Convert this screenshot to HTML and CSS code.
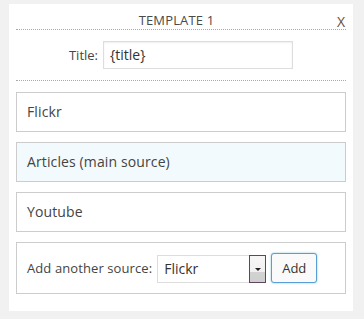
FILE: index.html
```html
<!DOCTYPE html>
<html>
<head>
<meta charset="utf-8">
<link rel="stylesheet" href="styles.css">
</head>
<body>
<div class="panel">
  <div class="header">
    <div class="header-title">TEMPLATE 1</div>
    <div class="close">X</div>
  </div>
  <div class="title-row">
    <label class="title-label">Title:</label>
    <div class="title-input">{title}</div>
  </div>
  <div class="source first">Flickr</div>
  <div class="source main">Articles (main source)</div>
  <div class="source">Youtube</div>
  <div class="add-row">
    <span class="add-label">Add another source:</span>
    <div class="select">
      <span class="select-value">Flickr</span>
      <span class="select-arrow"><span class="tri"></span></span>
    </div>
    <button class="add-btn">Add</button>
  </div>
</div>
</body>
</html>
```
FILE: styles.css
```css
html, body {
  margin: 0;
  padding: 0;
  background: #f1f1f1;
}
body {
  font-family: "Open Sans", "DejaVu Sans", sans-serif;
  color: #444;
}
.panel {
  margin: 4px 11px 0 9px;
  background: #fff;
  padding: 0 7px 17px 7px;
  height: 290px;
}
.header {
  display: flex;
  align-items: flex-end;
  padding-top: 7px;
  border-bottom: 1px dotted #aaa;
}
.header-title {
  flex: 1;
  text-align: center;
  font-size: 13px;
  line-height: 18px;
  letter-spacing: 0.15px;
  color: #4a4a4a;
}
.close {
  font-size: 14px;
  line-height: 14px;
  color: #6a4a3c;
  width: 8px;
  margin-right: 1px;
}
.title-row {
  display: flex;
  justify-content: center;
  align-items: center;
  gap: 5px;
  padding: 11px 0;
  border-bottom: 1px dotted #aaa;
}
.title-label {
  font-size: 13px;
  color: #444;
}
.title-input {
  box-sizing: border-box;
  width: 190px;
  height: 28px;
  border: 1px solid #ddd;
  box-shadow: inset 0 1px 2px rgba(0,0,0,.07);
  padding-left: 6px;
  font-size: 14px;
  line-height: 26px;
  color: #333;
}
.source {
  box-sizing: border-box;
  height: 40px;
  border: 1px solid #ccc;
  margin-top: 10px;
  padding-left: 10px;
  font-size: 14px;
  line-height: 38px;
  letter-spacing: 0.12px;
  color: #444;
}
.source.first {
  margin-top: 11px;
}
.source.main {
  background: #f2fafd;
}
.add-row {
  box-sizing: border-box;
  height: 52px;
  border: 1px solid #ccc;
  margin-top: 10px;
  padding-left: 10px;
  display: flex;
  align-items: center;
}
.add-label {
  font-size: 13px;
  line-height: 18px;
  letter-spacing: 0.1px;
  color: #444;
  margin-right: 5px;
}
.select {
  box-sizing: border-box;
  width: 109px;
  height: 28px;
  border: 1px solid #ddd;
  border-right: none;
  display: flex;
  margin-top: 2px;
}
.select-value {
  flex: 1;
  padding-left: 6px;
  font-size: 14px;
  line-height: 26px;
  color: #333;
}
.select-arrow {
  box-sizing: border-box;
  width: 17px;
  margin: -1px 0;
  border: 1px solid #5e4560;
  background: linear-gradient(#f6f6f6 0, #f0f0f0 60%, #d2d2d2 62%, #cfcfcf 100%);
  display: flex;
  justify-content: center;
  padding-top: 12px;
}
.tri {
  width: 0;
  height: 0;
  border-left: 3px solid transparent;
  border-right: 3px solid transparent;
  border-top: 3px solid #222;
}
.add-btn {
  box-sizing: border-box;
  width: 46px;
  height: 30px;
  margin-left: 5px;
  border: 1px solid #5b9dd9;
  border-radius: 3px;
  background: #fafafa;
  box-shadow: 0 0 2px rgba(30,140,190,.6);
  font-family: "Open Sans", "DejaVu Sans", sans-serif;
  font-size: 13px;
  color: #333;
  padding: 0;
}
```
